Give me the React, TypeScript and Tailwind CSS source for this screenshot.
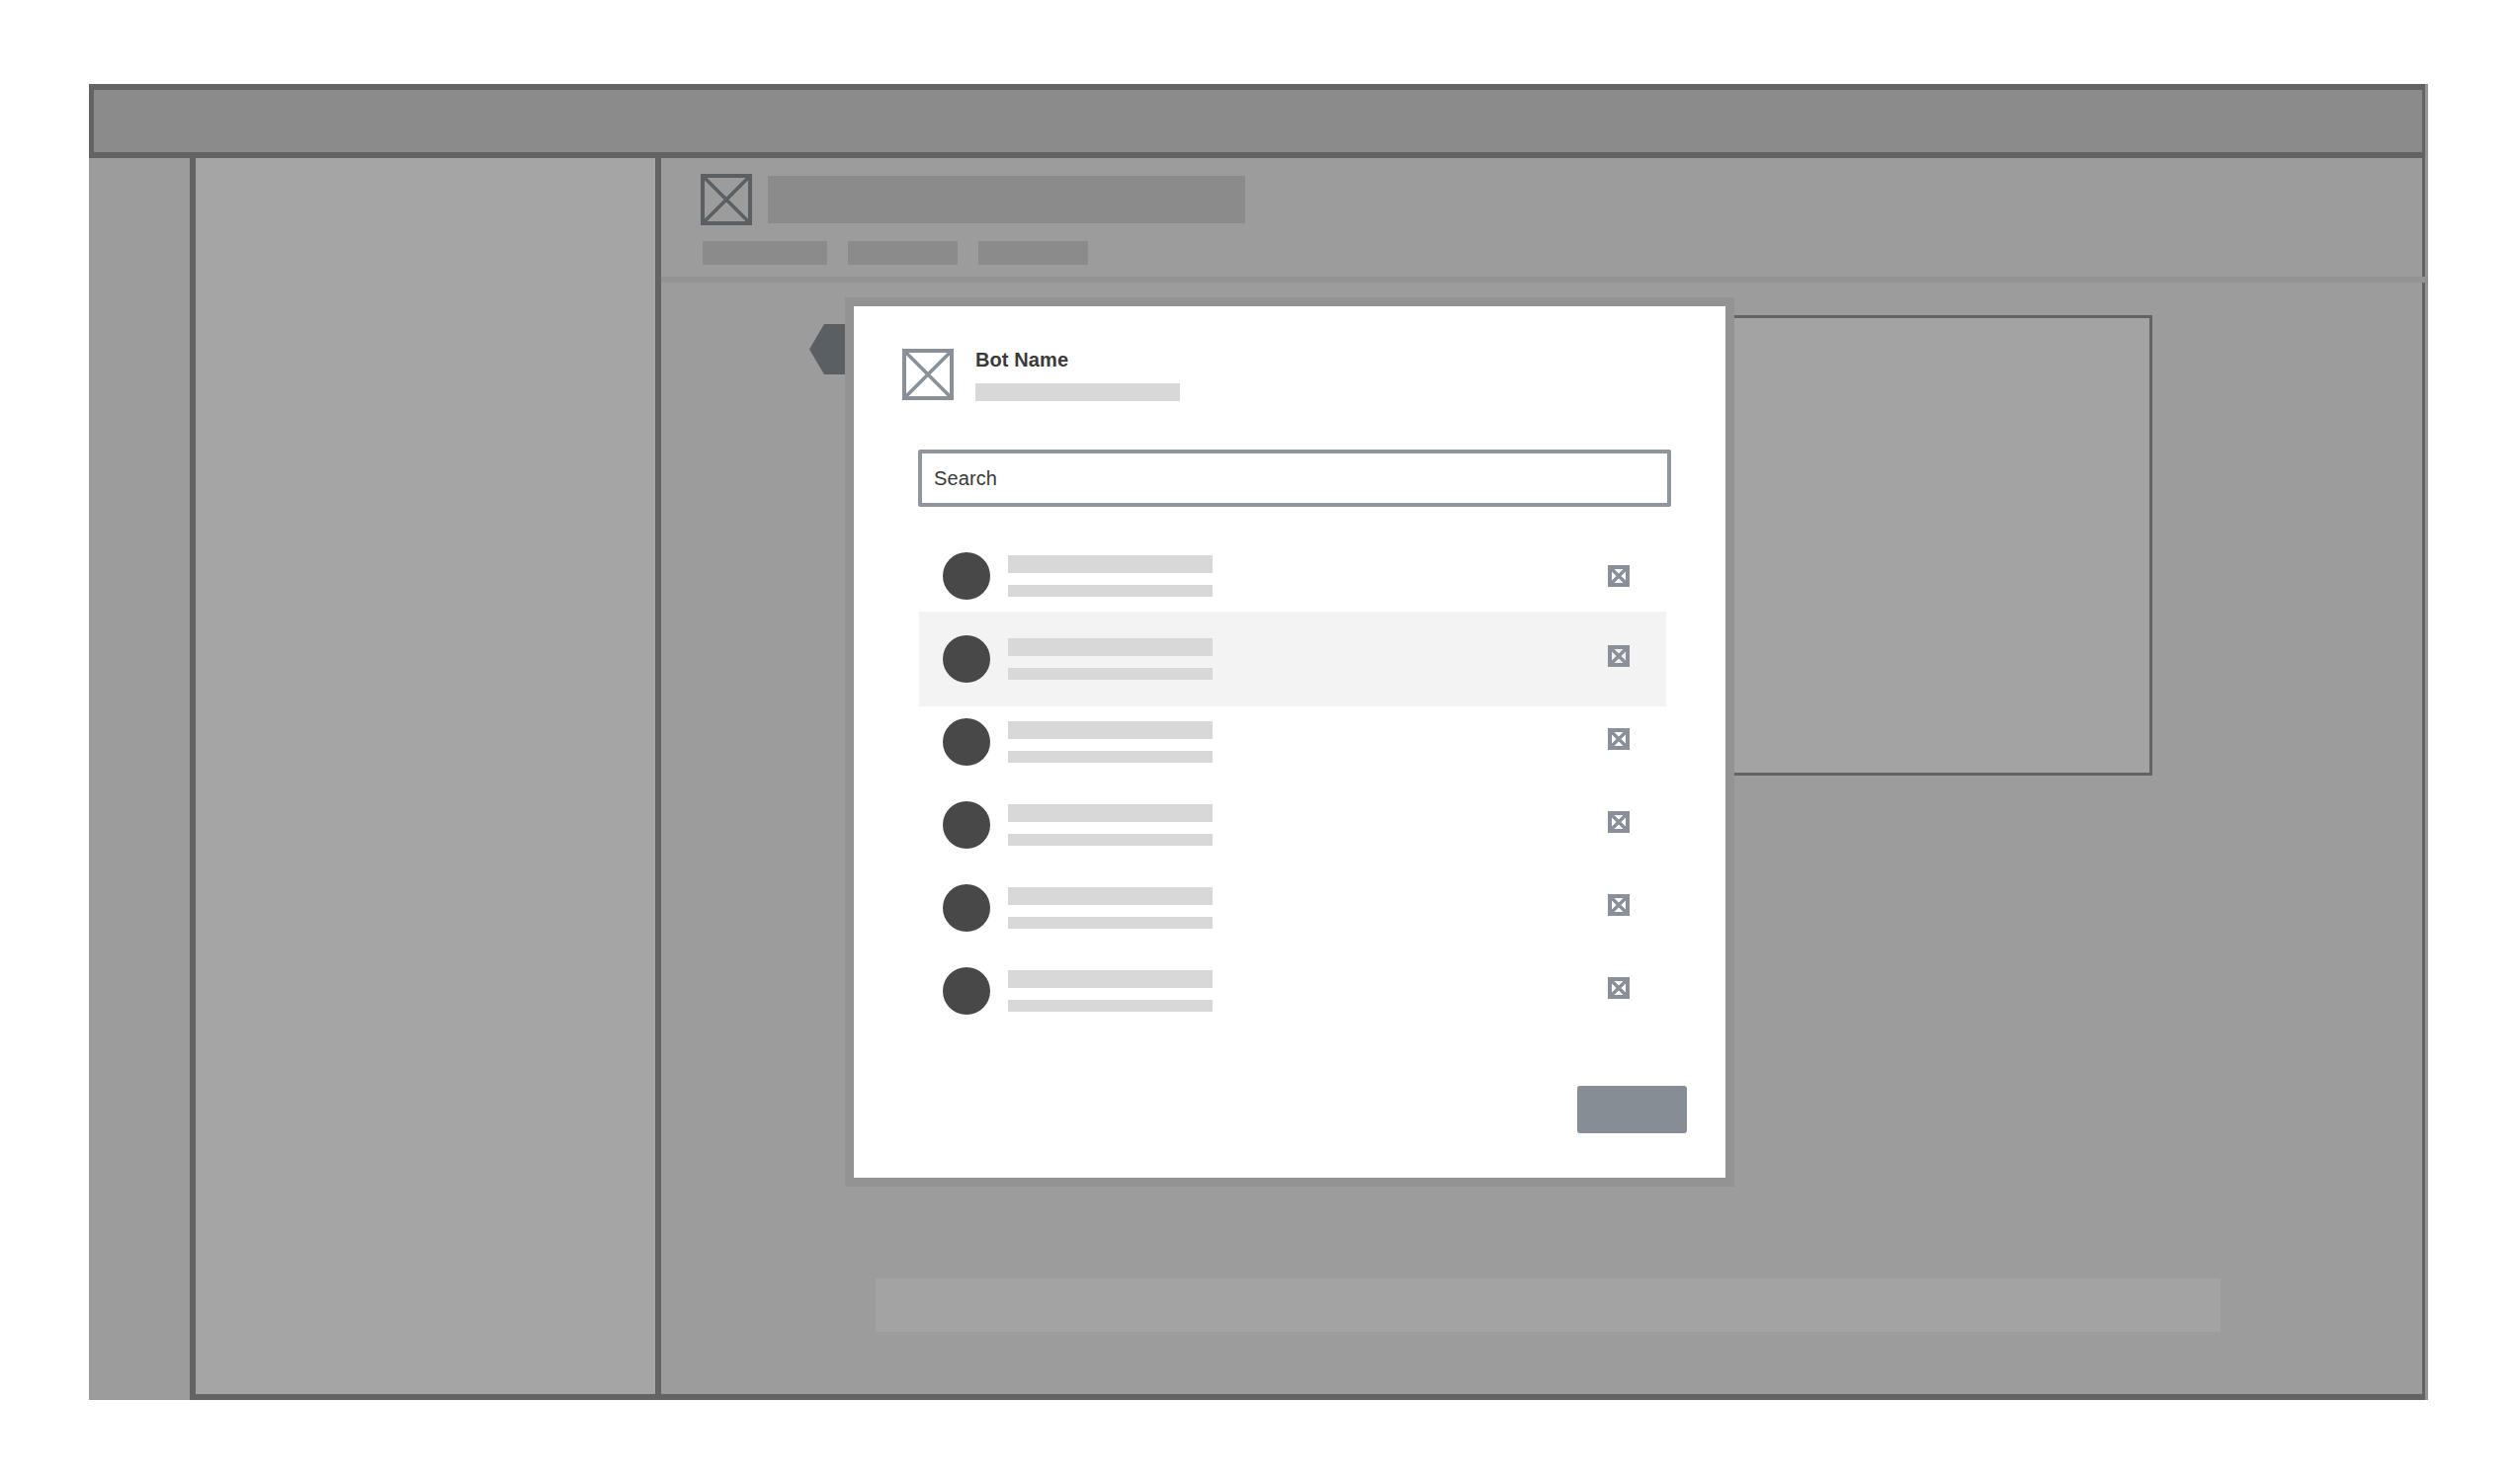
const rows = [
  { iconShift: "" },
  { iconShift: "mb-[6px]", active: true },
  { iconShift: "mb-[6px]" },
  { iconShift: "mb-[6px]" },
  { iconShift: "mb-[6px]" },
  { iconShift: "mb-[6px]" },
]

function CrossBox({ size, stroke, cross, color }: { size: number; stroke: number; cross: number; color: string }) {
  const inset = stroke / 2
  return (
    <svg width={size} height={size} viewBox={`0 0 ${size} ${size}`} className="shrink-0">
      <rect x={inset} y={inset} width={size - stroke} height={size - stroke} fill="none" stroke={color} strokeWidth={stroke} />
      <path d={`M${inset} ${inset}L${size - inset} ${size - inset}M${size - inset} ${inset}L${inset} ${size - inset}`} stroke={color} strokeWidth={cross} />
    </svg>
  )
}

function Row({ iconShift, active }: { iconShift: string; active?: boolean }) {
  return (
    <div className={`ml-[66px] w-[756px] flex items-center pl-[24px] pr-[37px] ${active ? "h-[96px] -my-[6px] bg-[#f3f3f3]" : "h-[84px]"}`}>
      <div className="w-[48px] h-[48px] rounded-full bg-[#484848] shrink-0" />
      <div className="ml-[18px] w-[207px] flex flex-col gap-[12px]">
        <div className="h-[18px] bg-[#d8d8d8]" />
        <div className="h-[12px] bg-[#d8d8d8]" />
      </div>
      <div className={`ml-auto ${iconShift}`}>
        <CrossBox size={22} stroke={4} cross={3.5} color="#8a9099" />
      </div>
    </div>
  )
}

export default function App() {
  return (
    <div className="w-[2550px] h-[1500px] bg-white pt-[85px] pl-[90px] font-['Liberation_Sans',Arial,sans-serif]">
      <div className="w-[2367px] h-[1332px] flex flex-col bg-[#969696]">
        <div className="h-[75px] mr-[3px] shrink-0 bg-[#8b8b8b] border-y-[6px] border-l-[5px] border-r-[3px] border-[#636363]" />
        <div className="flex flex-1 min-h-0">
          <div className="w-[102px] shrink-0 bg-[#9c9c9c]" />
          <div className="w-[477px] shrink-0 bg-[#a5a5a5] border-x-[6px] border-b-[6px] border-[#636363]" />
          <div className="relative flex-1 flex flex-col">
            <div className="h-[120px] mr-[3px] shrink-0 bg-[#9c9c9c] border-r-[3px] border-[#636363] pl-[40px] pt-[16px]">
              <div className="flex items-center">
                <CrossBox size={52} stroke={4} cross={3.5} color="#5a5f63" />
                <div className="ml-[16px] w-[483px] h-[48px] bg-[#8b8b8b]" />
              </div>
              <div className="flex mt-[16px] ml-[2px] gap-[21px]">
                <div className="w-[126px] h-[24px] bg-[#8b8b8b]" />
                <div className="w-[111px] h-[24px] bg-[#8b8b8b]" />
                <div className="w-[111px] h-[24px] bg-[#8b8b8b]" />
              </div>
            </div>
            <div className="h-[6px] shrink-0 bg-[#939393]" />
            <div className="flex-1 mr-[3px] bg-[#9c9c9c] border-r-[3px] border-b-[6px] border-[#636363] pt-[33px]">
              <div className="ml-[1031px] w-[478px] h-[466px] bg-[#a3a3a3] border-[3px] border-[#636363]" />
              <div className="ml-[217px] mt-[509px] w-[1361px] h-[54px] bg-[#a3a3a3]" />
            </div>

            <svg width="36" height="51" viewBox="0 0 36 51" className="absolute left-[150px] top-[168px]">
              <path d="M15 0H36V51H15L0 25.5Z" fill="#5a5f63" />
            </svg>

            <div className="absolute left-[195px] top-[150px] w-[882px] h-[882px] bg-white shadow-[0_0_0_9px_#939393] pt-[43px]">
              <div className="flex ml-[49px]">
                <CrossBox size={52} stroke={4} cross={3.5} color="#8a9099" />
                <div className="ml-[22px]">
                  <div className="text-[20px] leading-[23px] font-bold tracking-[0.1px] text-[#3a3a3a]">Bot Name</div>
                  <div className="mt-[12px] w-[207px] h-[18px] bg-[#d8d8d8]" />
                </div>
              </div>
              <div className="ml-[65px] mt-[49px] w-[762px] h-[58px] border-[4px] border-[#8f959d] rounded-[2px] pl-[12px] flex items-center text-[20px] leading-[23px] tracking-[0.1px] text-[#3a3a3a]">
                Search
              </div>
              <div className="mt-[28px]">
                {rows.map((row, i) => (
                  <Row key={i} iconShift={row.iconShift} active={row.active} />
                ))}
              </div>
              <div className="ml-[732px] mt-[54px] w-[111px] h-[48px] rounded-[3px] bg-[#878d95]" />
            </div>
          </div>
        </div>
      </div>
    </div>
  )
}
